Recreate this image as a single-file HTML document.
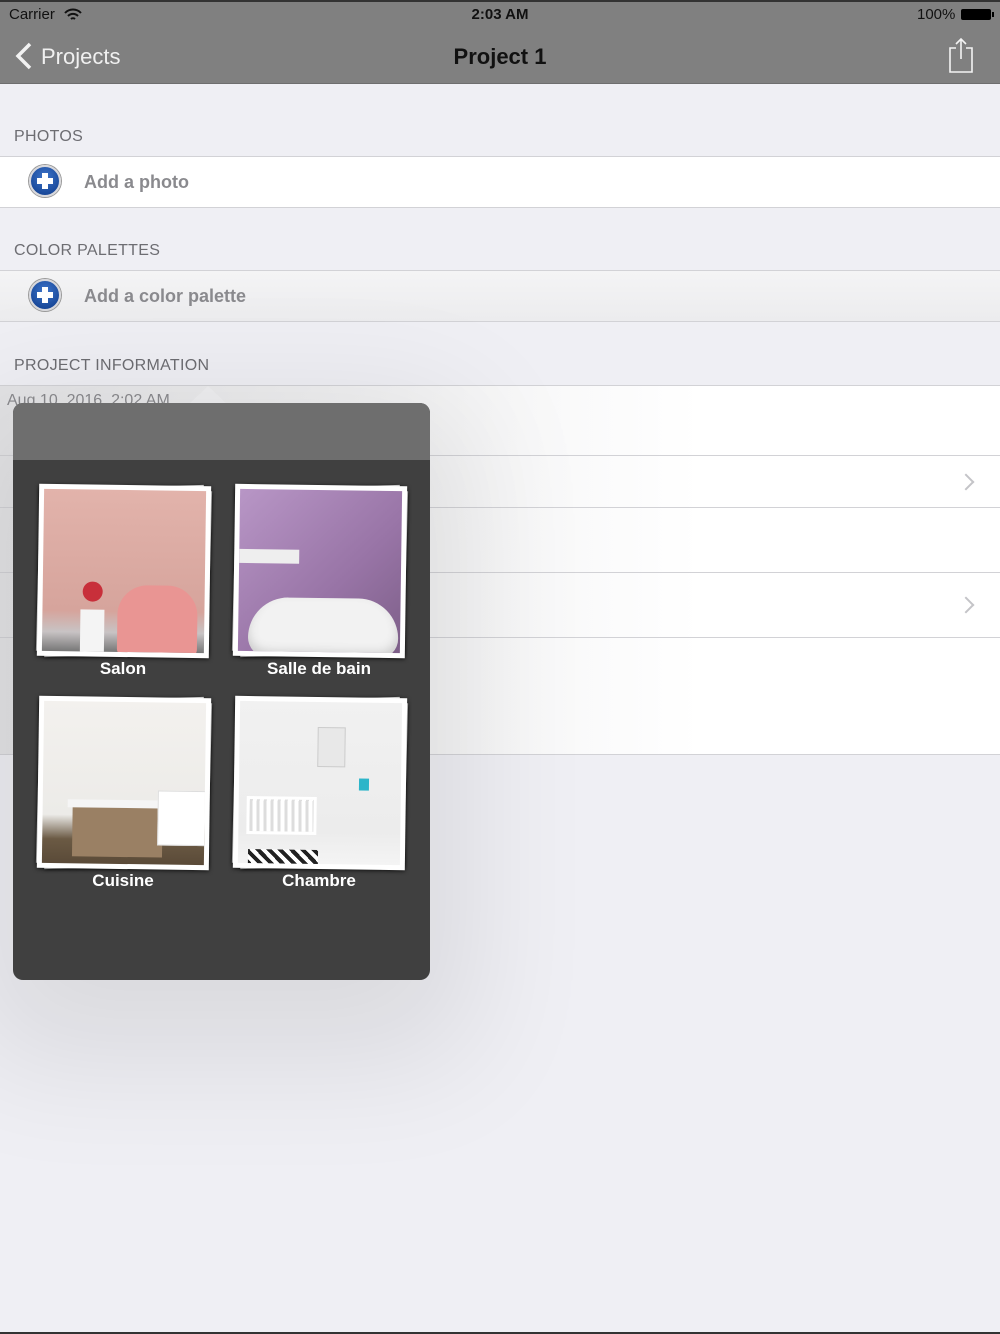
<!DOCTYPE html>
<html><head><meta charset="utf-8"><style>
*{margin:0;padding:0;box-sizing:border-box}
body{width:1000px;height:1334px;overflow:hidden;background:#efeff4;font-family:"Liberation Sans",sans-serif;position:relative}
.nav{position:absolute;left:0;top:0;width:1000px;height:84px;background:#808080;border-top:2px solid #333;border-bottom:1px solid #6e6e6e}
.abs{position:absolute}
.lbl{position:absolute;left:14px;font-size:16px;color:#6d6d72;letter-spacing:.3px}
.row{position:absolute;left:0;width:1000px;background:linear-gradient(90deg,#e4e4e6 0,#f3f3f4 40%,#fff 70%);border-bottom:1px solid #d2d2d6}
.row.t{border-top:1px solid #d2d2d6}
.plus{position:absolute;left:29px;width:32px;height:32px;border-radius:50%;background:radial-gradient(circle at 50% 35%,#3d74c9,#0d3a8a);border:2px solid #d8d8dc;box-shadow:0 0 0 1px #999}
.plus:before{content:"";position:absolute;left:6px;top:11px;width:16px;height:6px;background:#fff}
.plus:after{content:"";position:absolute;left:11px;top:6px;width:6px;height:16px;background:#fff}
.rt{position:absolute;left:84px;font-size:18px;color:#8a8a8e;font-weight:bold}
.chev{position:absolute;left:960px;width:12px;height:12px;border-right:2px solid #c4c4c8;border-top:2px solid #c4c4c8;transform:rotate(45deg)}
.pop{position:absolute;left:13px;top:403px;width:417px;height:577px;border-radius:10px;background:#404040;overflow:hidden;box-shadow:0 40px 180px 40px rgba(0,0,0,.09)}
.pophd{height:57px;background:#6e6e6e}
.tile{position:absolute;width:172px;height:172px}
.tile .b{position:absolute;inset:2px 4px;background:#f4f4f4;transform:rotate(-1.5deg);box-shadow:0 1px 3px rgba(0,0,0,.6)}
.tile .b2{position:absolute;inset:4px 0;background:#eee;transform:rotate(1.5deg);box-shadow:0 1px 3px rgba(0,0,0,.6)}
.tile .f{position:absolute;inset:0;background:#fff;padding:5px;transform:rotate(.8deg);box-shadow:0 1px 4px rgba(0,0,0,.7)}
.tile .im{width:100%;height:100%;position:relative;overflow:hidden}
.cap{position:absolute;width:200px;text-align:center;color:#fff;font-size:17px;font-weight:bold}
</style></head><body>
<div class="nav">
<div class="abs" style="left:9px;top:4px;font-size:15px;color:#111">Carrier</div>
<svg class="abs" style="left:64px;top:6px" width="18" height="14" viewBox="0 0 18 14"><path d="M1 5a11 11 0 0 1 16 0M4 8a7 7 0 0 1 10 0M7 11a3 3 0 0 1 4 0" stroke="#111" stroke-width="2" fill="none"/></svg>
<div class="abs" style="left:0;width:1000px;top:4px;text-align:center;font-size:15px;font-weight:bold;color:#111">2:03 AM</div>
<div class="abs" style="left:917px;top:4px;font-size:15px;color:#111">100%</div>
<div class="abs" style="left:961px;top:7px;width:30px;height:11px;background:#000;border-radius:2px"></div>
<div class="abs" style="left:992px;top:10px;width:2px;height:5px;background:#000"></div>
<svg class="abs" style="left:14px;top:40px" width="20" height="28" viewBox="0 0 20 28"><path d="M16 2 4 14l12 12" stroke="#f2f2f2" stroke-width="3.5" fill="none"/></svg>
<div class="abs" style="left:41px;top:42px;font-size:22px;color:#f0f0f0">Projects</div>
<div class="abs" style="left:0;width:1000px;top:42px;text-align:center;font-size:22px;font-weight:bold;color:#111">Project 1</div>
<svg class="abs" style="left:946px;top:34px" width="30" height="38" viewBox="0 0 30 38"><path d="M10 12H4v24h22V12h-6M15 3v20M10 8l5-5 5 5" stroke="#f4f4f4" stroke-width="1.6" fill="none"/></svg>
</div>
<div class="lbl" style="top:128px">PHOTOS</div>
<div class="row t" style="top:156px;height:52px;background:#fff"><div class="plus" style="top:8px"></div><div class="rt" style="top:15px">Add a photo</div></div>
<div class="lbl" style="top:242px">COLOR PALETTES</div>
<div class="row t" style="top:270px;height:52px;background:linear-gradient(#f4f4f5,#ececee)"><div class="plus" style="top:8px"></div><div class="rt" style="top:15px">Add a color palette</div></div>
<div class="lbl" style="top:357px">PROJECT INFORMATION</div>
<div class="row t" style="top:385px;height:71px"><div class="abs" style="left:7px;top:6px;font-size:16px;color:#8a8a8e">Aug 10, 2016, 2:02 AM</div></div>
<div class="row" style="top:456px;height:52px"><div class="chev" style="top:20px"></div></div>
<div class="row" style="top:508px;height:65px"></div>
<div class="row" style="top:573px;height:65px"><div class="chev" style="top:26px"></div></div>
<div class="row" style="top:638px;height:117px"></div>
<div class="abs" style="left:190px;top:386px;width:0;height:0;border-left:18px solid transparent;border-right:18px solid transparent;border-bottom:17px solid #f0f0f2"></div>
<div class="pop"><div class="pophd"></div>
<div class="tile" style="left:25px;top:82px"><div class="b"></div><div class="b2"></div><div class="f"><div class="im" style="background:linear-gradient(#e2b3ab,#d6a49c 75%,#c8c3c4 88%,#777 100%)">
<div class="abs" style="left:75px;top:95px;width:80px;height:70px;border-radius:30px 30px 6px 6px;background:#e99593"></div>
<div class="abs" style="left:38px;top:120px;width:24px;height:45px;background:#f4f4f4"></div>
<div class="abs" style="left:40px;top:92px;width:20px;height:20px;border-radius:50%;background:#c82f3a"></div>
</div></div></div>
<div class="tile" style="left:221px;top:82px"><div class="b"></div><div class="b2"></div><div class="f"><div class="im" style="background:linear-gradient(135deg,#b896c6,#9874a6 60%,#7d5f88)">
<div class="abs" style="left:0;top:60px;width:60px;height:14px;background:#eee"></div>
<div class="abs" style="left:10px;top:108px;width:150px;height:60px;border-radius:60px 60px 30px 30px;background:#f2f2f2;box-shadow:inset 0 -6px 10px #ccc"></div>
</div></div></div>
<div class="tile" style="left:25px;top:294px"><div class="b"></div><div class="b2"></div><div class="f"><div class="im" style="background:linear-gradient(#f3f1ee,#ecebe8 70%,#6b5a44 85%,#5a4a38)">
<div class="abs" style="left:30px;top:105px;width:90px;height:50px;background:#9a8064"></div>
<div class="abs" style="left:25px;top:98px;width:100px;height:8px;background:#f5f5f5"></div>
<div class="abs" style="left:115px;top:88px;width:50px;height:55px;background:#fff;border:1px solid #ddd"></div>
</div></div></div>
<div class="tile" style="left:221px;top:294px"><div class="b"></div><div class="b2"></div><div class="f"><div class="im" style="background:linear-gradient(#f1f1f1,#ececec 80%,#f4f4f4)">
<div class="abs" style="left:78px;top:25px;width:28px;height:40px;background:#e8e8e8;border:1px solid #ccc"></div>
<div class="abs" style="left:8px;top:95px;width:70px;height:38px;border:3px solid #fff;background:repeating-linear-gradient(90deg,#ddd 0 3px,#fff 3px 7px)"></div>
<div class="abs" style="left:10px;top:148px;width:70px;height:16px;background:repeating-linear-gradient(45deg,#222 0 4px,#fff 4px 8px)"></div>
<div class="abs" style="left:120px;top:76px;width:10px;height:12px;background:#2cb5c9"></div>
</div></div></div>
</div>
<div class="cap" style="left:23px;top:659px">Salon</div>
<div class="cap" style="left:219px;top:659px">Salle de bain</div>
<div class="cap" style="left:23px;top:871px">Cuisine</div>
<div class="cap" style="left:219px;top:871px">Chambre</div>
<div class="abs" style="left:0;top:1332px;width:1000px;height:2px;background:#333"></div>
</body></html>
